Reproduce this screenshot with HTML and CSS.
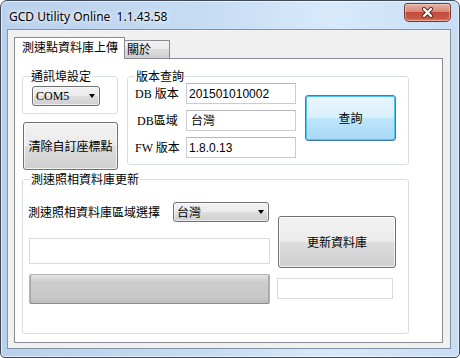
FILE: index.html
```html
<!DOCTYPE html>
<html lang="zh-Hant">
  <head>
    <meta charset="UTF-8" />
    <meta name="viewport" content="width=device-width, initial-scale=1.0" />
    <title>GCD Utility Online</title>
    <link rel="stylesheet" href="styles.css">
  </head>
  <body>
    <div class="window">
      <div class="titlebar">
        <span class="title">GCD Utility Online  1.1.43.58</span>
        <button class="close" aria-label="close">
          <svg width="13" height="11" viewBox="0 0 13 11">
            <path d="M3 2 L10 9 M10 2 L3 9" stroke="#5a2a24" stroke-width="4" stroke-linecap="round" />
            <path d="M3 2 L10 9 M10 2 L3 9" stroke="#fff" stroke-width="2.2" stroke-linecap="round" />
          </svg>
        </button>
      </div>

      <div class="client">
        <div class="tabs">
          <div class="tab tab-active">測速點資料庫上傳</div>
          <div class="tab tab-idle">關於</div>
        </div>

        <div class="page">
          <div class="top-row">
            <div class="left-col">
              <fieldset class="group group-port">
                <legend>通訊埠設定</legend>
                <div class="port-body">
                  <div class="combo combo-com">
                    <span>COM5</span>
                    <span class="arrow"></span>
                  </div>
                </div>
              </fieldset>
              <button class="btn btn-clear">清除自訂座標點</button>
            </div>

            <fieldset class="group group-version">
              <legend>版本查詢</legend>
              <div class="version-body">
                <div class="fields">
                  <div class="field">
                    <label>DB 版本</label>
                    <div class="textbox">201501010002</div>
                  </div>
                  <div class="field">
                    <label class="label-shift">DB區域</label>
                    <div class="textbox textbox-wide">台灣</div>
                  </div>
                  <div class="field">
                    <label>FW 版本</label>
                    <div class="textbox">1.8.0.13</div>
                  </div>
                </div>
                <button class="btn btn-default">查詢</button>
              </div>
            </fieldset>
          </div>

          <fieldset class="group group-update">
            <legend>測速照相資料庫更新</legend>
            <div class="update-body">
              <div class="update-left">
                <div class="region-row">
                  <span class="region-label">測速照相資料庫區域選擇</span>
                  <div class="combo combo-region">
                    <span>台灣</span>
                    <span class="arrow"></span>
                  </div>
                </div>
                <div class="textbox textbox-status"></div>
                <div class="progress"></div>
              </div>
              <div class="update-right">
                <button class="btn btn-update">更新資料庫</button>
                <div class="textbox textbox-count"></div>
              </div>
            </div>
          </fieldset>
        </div>
      </div>
    </div>
  </body>
</html>
```

FILE: styles.css
```css
* {
  box-sizing: border-box;
}

body {
  margin: 0;
  background: #fff;
  color: #000;
  font: 12px/14px "Liberation Serif", "Noto Sans CJK TC", serif;
}

/* window frame */
.window {
  width: 460px;
  height: 358px;
  padding: 0 8px 8px 6px;
  border: 1px solid #3f4a56;
  border-radius: 7px 7px 5px 5px;
  background: linear-gradient(90deg, #b9d1ec 0%, #c6dcf3 45%, #d8e9fb 72%, #c8ddf4 100%);
  box-shadow: inset 0 0 0 1px rgba(255, 255, 255, 0.55);
}

.titlebar {
  height: 28px;
  display: flex;
  justify-content: space-between;
  align-items: flex-start;
}

.title {
  margin: 8px 0 0 2px;
  white-space: pre;
  font: 12px/16px "Noto Sans", sans-serif;
  color: #000;
  text-shadow: 0 0 6px #fff, 0 0 3px #fff;
}

.close {
  width: 47px;
  height: 19px;
  margin-top: 2px;
  padding: 0;
  display: flex;
  align-items: center;
  justify-content: center;
  border: 1px solid #6e3b35;
  border-radius: 3px 3px 5px 5px;
  background: linear-gradient(#e8b0a2, #d98a79 45%, #c4493a 50%, #c85a47 85%, #d98a6c);
  box-shadow: inset 0 0 0 1px rgba(255, 220, 210, 0.45);
}

/* client area */
.client {
  height: 320px;
  padding: 7px 7px 5px 6px;
  border: 1px solid #8594a4;
  background: #f0f0f0;
}

.tabs {
  height: 21px;
  display: flex;
  align-items: flex-end;
  font-family: "Noto Sans CJK TC", sans-serif;
}

.tab {
  border: 1px solid #898c95;
  border-bottom: 0;
  white-space: nowrap;
}

.tab-active {
  position: relative;
  z-index: 1;
  width: 111px;
  height: 22px;
  margin-bottom: -1px;
  padding: 2px 0 0 7px;
  background: #fff;
}

.tab-idle {
  width: 45px;
  height: 18px;
  padding: 1px 0 0 2px;
  border-left: 0;
  background: linear-gradient(#f2f2f2, #ebebeb 50%, #dddddd 50%, #cfcfcf);
}

.page {
  height: 285px;
  padding: 10px 0 0 7px;
  border: 1px solid #898c95;
  background: #fff;
}

/* group boxes */
.group {
  margin: 0;
  padding: 0;
  min-width: 0;
  border: 1px solid #d5dfe5;
  border-radius: 3px;
}

.group legend {
  padding: 0 1px;
  margin-left: 7px;
  line-height: 14px;
  font-family: "Noto Sans CJK TC", sans-serif;
}

.top-row {
  display: flex;
  gap: 9px;
}

.left-col {
  width: 96px;
  display: flex;
  flex-direction: column;
  gap: 8px;
}

.group-port {
  height: 45px;
}

.port-body {
  padding: 3px 0 0 9px;
}

.combo {
  height: 20px;
  display: flex;
  align-items: center;
  justify-content: space-between;
  padding: 0 4px 0 3px;
  border: 1px solid #707070;
  border-radius: 3px;
  background: linear-gradient(#f2f2f2, #ebebeb 50%, #dddddd 50%, #cfcfcf);
  box-shadow: inset 0 0 0 1px rgba(255, 255, 255, 0.6);
}

.combo-com {
  width: 68px;
}

.combo-region {
  width: 96px;
  font-family: "Noto Sans CJK TC", sans-serif;
}

.arrow {
  width: 0;
  height: 0;
  border-top: 4px solid #000;
  border-left: 3.5px solid transparent;
  border-right: 3.5px solid transparent;
}

/* buttons */
.btn {
  padding: 0;
  border: 1px solid #707070;
  border-radius: 3px;
  background: linear-gradient(#f2f2f2, #ebebeb 50%, #dddddd 50%, #cfcfcf);
  box-shadow: inset 0 0 0 1px rgba(255, 255, 255, 0.7);
  color: #000;
  font: 12px/14px "Noto Sans CJK TC", sans-serif;
}

.btn-clear {
  width: 95px;
  height: 48px;
  margin-left: 1px;
}

.btn-default {
  width: 91px;
  height: 46px;
  margin: 12px 0 0 9px;
  border-color: #3c7fb1;
  background: linear-gradient(#eaf6fd, #d9f0fc 50%, #bee6fd 50%, #a7d9f5);
  box-shadow: inset 0 0 0 1px #4fc4f2;
}

.btn-update {
  width: 118px;
  height: 52px;
  margin: 14px 0 0 1px;
}

/* version group */
.group-version {
  width: 282px;
  height: 96px;
}

.version-body {
  display: flex;
  padding-left: 7px;
}

.fields {
  display: flex;
  flex-direction: column;
  gap: 6px;
}

.field {
  height: 21px;
  display: flex;
  align-items: center;
}

.field label {
  width: 51px;
}

.field .label-shift {
  padding-left: 2px;
}

.textbox {
  width: 110px;
  height: 21px;
  display: flex;
  align-items: center;
  padding-left: 2px;
  border: 1px solid #c9ccd2;
  border-top-color: #b5b8be;
  background: #fff;
  font-family: "Liberation Sans", "Noto Sans CJK TC", sans-serif;
}

.textbox-wide {
  padding-left: 4px;
}

/* update group */
.group-update {
  width: 387px;
  height: 162px;
  margin-top: 2px;
}

.update-body {
  display: flex;
  gap: 7px;
  padding: 16px 0 0 5px;
}

.update-left {
  width: 242px;
  display: flex;
  flex-direction: column;
}

.region-row {
  display: flex;
  align-items: center;
}

.region-label {
  width: 145px;
  font-family: "Noto Sans CJK TC", sans-serif;
}

.textbox-status {
  width: 241px;
  height: 26px;
  margin: 16px 0 0 1px;
  border-color: #d9dbdf;
}

.progress {
  width: 241px;
  height: 30px;
  margin: 10px 0 0 1px;
  border: 1px solid #b4b4b4;
  border-bottom-color: #8c8c8c;
  border-radius: 2px;
  background: linear-gradient(#e4e4e4, #cdcdcd 25%, #c8c8c8 80%, #bdbdbd);
  box-shadow: inset 1px 0 0 #a8a8a8, inset -1px 0 0 #a8a8a8;
}

.update-right {
  display: flex;
  flex-direction: column;
}

.textbox-count {
  width: 116px;
  height: 21px;
  margin-top: 10px;
  border-color: #d9dbdf;
}
```
